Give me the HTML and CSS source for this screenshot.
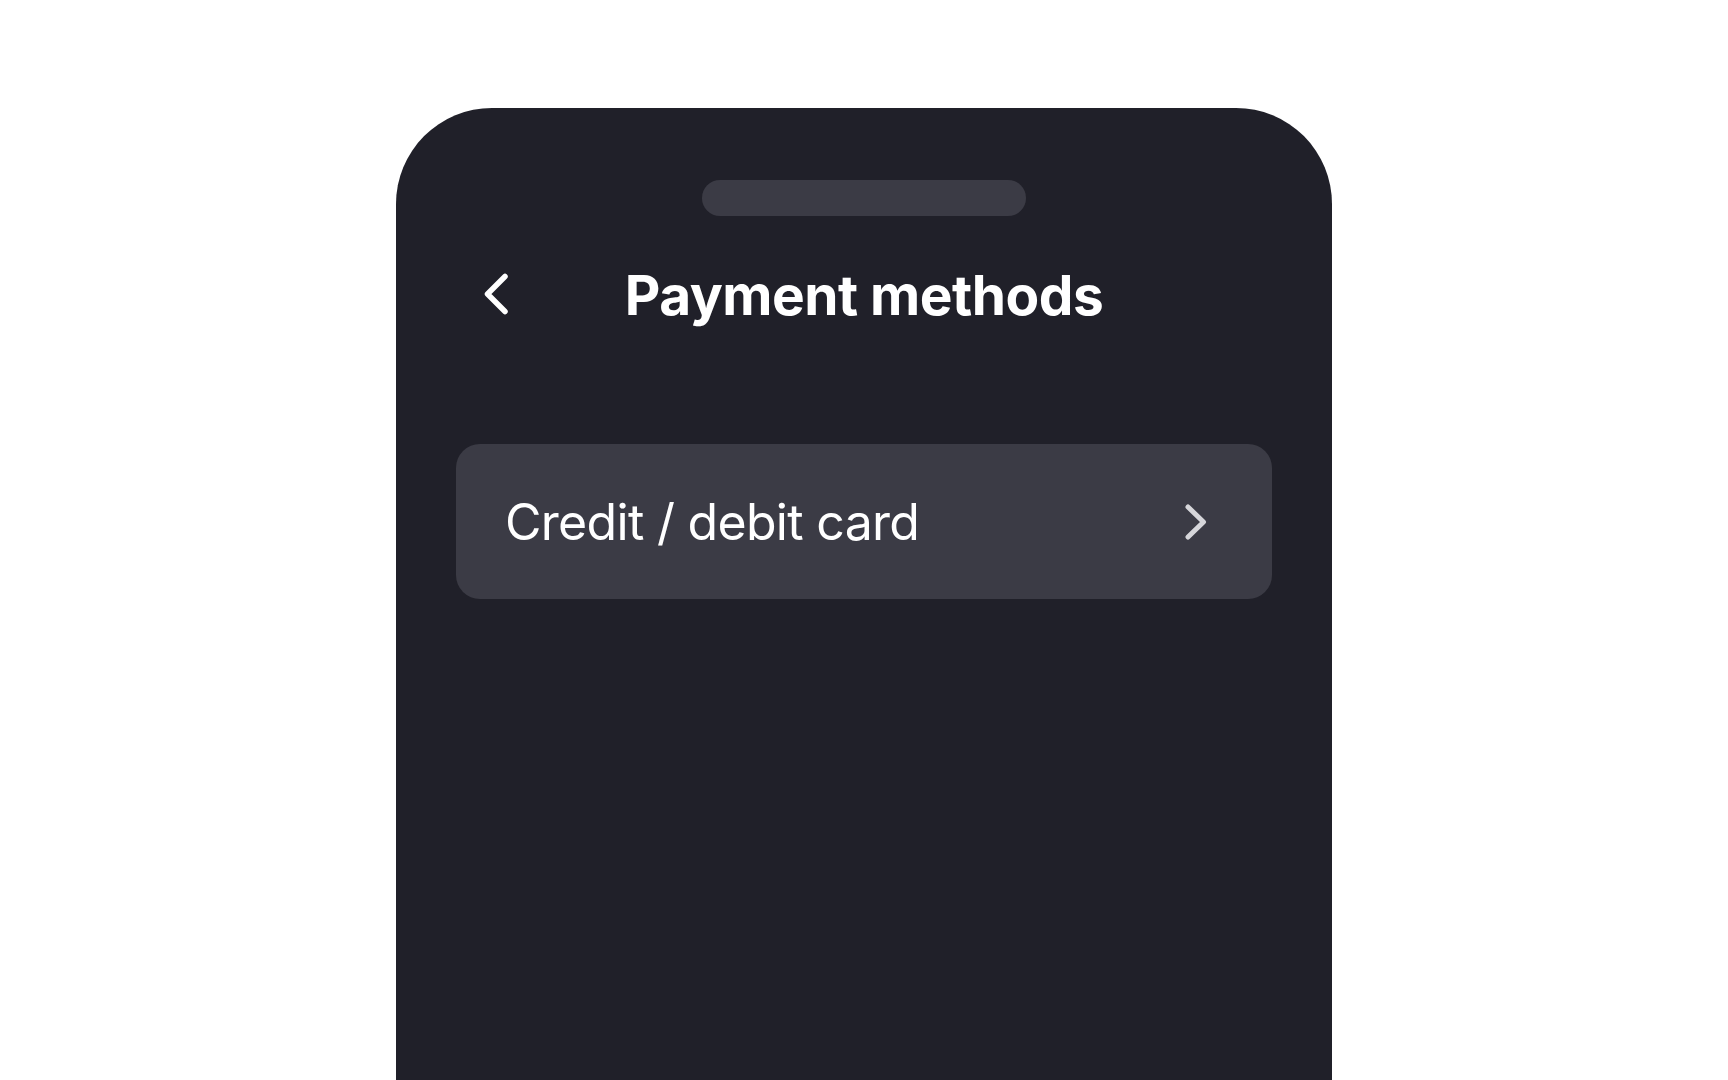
FILE: index.html
```html
<!DOCTYPE html>
<html>

<head>
    <meta charset="utf-8">
    <meta name="viewport" content="width=device-width, initial-scale=1">
    <title>Payment methods</title>
    <link rel="stylesheet" href="styles.css">
</head>

<body>
    <div class="phone">
        <div class="notch"></div>

        <div class="header">
            <a class="back" href="#">
                <svg width="28" height="42" viewBox="0 0 28 42">
                    <polyline points="23,3.5 5.5,21 23,38.5" />
                </svg>
            </a>
            <h1>Payment methods</h1>
            <span></span>
        </div>

        <a class="method" href="#">
            <span>Credit / debit card</span>
            <svg width="22" height="36" viewBox="0 0 22 36">
                <polyline points="3,3 18.5,18 3,33" />
            </svg>
        </a>
    </div>
</body>

</html>
```

FILE: styles.css
```css
 body {
     margin: 0;
     background-color: white;
     font-family: Inter, "Noto Sans", sans-serif;
 }

 .phone {
     width: 936px;
     min-height: 1100px;
     margin: 108px auto 0;
     padding-top: 72px;
     box-sizing: border-box;
     background-color: #202029;
     border-radius: 96px 96px 0 0;
 }

 .notch {
     width: 324px;
     height: 36px;
     margin: 0 auto;
     border-radius: 18px;
     background-color: #3b3b45;
 }

 .header {
     display: grid;
     grid-template-columns: 1fr auto 1fr;
     align-items: center;
     margin-top: 47px;
     padding: 0 60px;
 }

 .back {
     display: flex;
     margin-left: 26px;
     margin-top: -3px;
 }

 .back polyline {
     fill: none;
     stroke: white;
     stroke-width: 5.5;
     stroke-linecap: round;
     stroke-linejoin: round;
 }

 h1 {
     margin: 0;
     font-size: 55px;
     line-height: 64px;
     font-weight: 700;
     letter-spacing: -0.5px;
     color: white;
 }

 .method {
     display: flex;
     align-items: center;
     justify-content: space-between;
     height: 155px;
     margin: 117px 60px 0;
     padding: 0 65px 0 49px;
     border-radius: 24px;
     background-color: #3b3b45;
     text-decoration: none;
 }

 .method span {
     font-size: 50px;
     letter-spacing: -0.7px;
     color: white;
 }

 .method polyline {
     fill: none;
     stroke: #d6d6da;
     stroke-width: 5;
     stroke-linecap: round;
     stroke-linejoin: round;
 }
```
